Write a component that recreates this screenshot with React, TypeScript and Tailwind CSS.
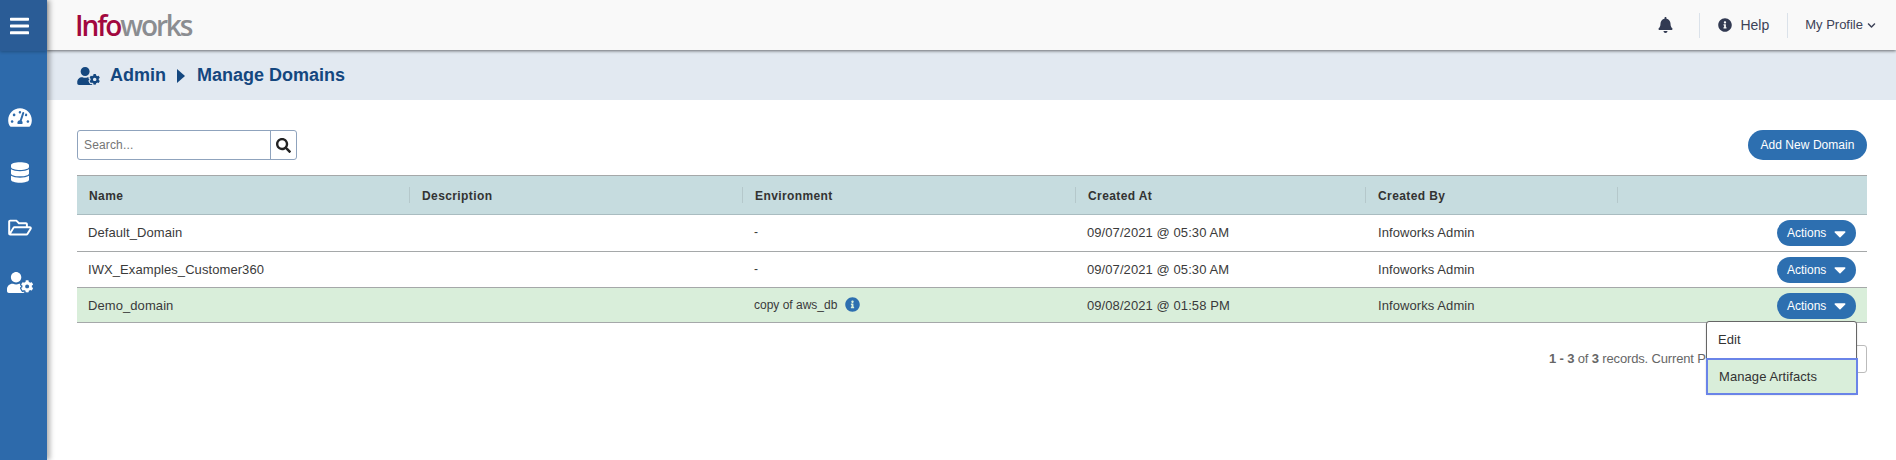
import React from "react";
import { FaBars, FaBell, FaCaretDown, FaChevronDown, FaDatabase, FaInfoCircle, FaRegFolderOpen, FaSearch, FaTachometerAlt, FaUserCog } from "react-icons/fa";

const cols = "grid grid-cols-[332px_333px_333px_290px_252px_1fr]";
const rows = [
  { name: "Default_Domain", env: "-", at: "09/07/2021 @ 05:30 AM", h: "h-[37px]", bg: "bg-white" },
  { name: "IWX_Examples_Customer360", env: "-", at: "09/07/2021 @ 05:30 AM", h: "h-[36px]", bg: "bg-white" },
  { name: "Demo_domain", env: "copy of aws_db", at: "09/08/2021 @ 01:58 PM", h: "h-[35px] pt-[1px]", bg: "bg-[#d9eeda]", info: true },
];

function Head({ label, sep = true }: { label?: string; sep?: boolean }) {
  return (
    <div className="flex h-full items-center">
      {sep ? <div className="h-[16px] w-px bg-[#b5c8cb]" /> : null}
      <span className="pl-[12px] pt-[2px]">{label}</span>
    </div>
  );
}

function Side({ children }: { children: React.ReactNode }) {
  return <div className="flex h-[55px] items-center justify-center pr-[8px]">{children}</div>;
}

export default function App() {
  return (
    <div className="relative flex h-[460px] w-[1896px] overflow-hidden bg-white font-['Liberation_Sans',sans-serif] text-[#333]">
      <aside className="z-20 flex w-[47px] shrink-0 flex-col bg-[#2d6aab] text-white shadow-[3px_0_5px_rgba(0,0,0,0.3)]">
        <div className="flex h-[51px] items-center justify-center bg-[#2a5c96] pr-[8px] shadow-[0_1px_3px_rgba(0,0,0,0.25)]">
          <FaBars className="h-[22px] w-[19px]" />
        </div>
        <div className="flex flex-col pt-[39px]">
          <Side><FaTachometerAlt className="h-[21px] w-[24px]" /></Side>
          <Side><FaDatabase className="h-[21px] w-[18px]" /></Side>
          <Side><FaRegFolderOpen className="h-[21px] w-[24px]" /></Side>
          <Side><FaUserCog className="h-[21px] w-[26px]" /></Side>
        </div>
      </aside>
      <main className="flex min-w-0 flex-1 flex-col">
        <header className="z-10 flex h-[50px] shrink-0 items-center bg-[#f9f9f9] pl-[28px] shadow-[0_1px_3px_rgba(0,0,0,0.55)]">
          <div className="font-['Open_Sans',sans-serif] text-[28px] font-semibold leading-none tracking-[-2.1px]">
            <span className="text-[#a2083f]">Info</span><span className="text-[#8b8d91]">works</span>
          </div>
          <div className="ml-auto flex h-[25px] items-center text-[#3c4257]">
            <FaBell className="mr-[26px] h-[16px] w-[15px] text-[#323a52]" />
            <div className="h-[25px] w-px bg-[#dbe2ea]" />
            <FaInfoCircle className="ml-[18px] h-[14px] w-[14px] text-[#323a52]" />
            <span className="ml-[8px] text-[14px]">Help</span>
            <div className="ml-[18px] h-[25px] w-px bg-[#dbe2ea]" />
            <span className="ml-[17px] text-[13px]">My Profile</span>
            <FaChevronDown className="ml-[4px] mr-[20px] h-[9px] w-[9px]" />
          </div>
        </header>
        <div className="flex h-[50px] shrink-0 items-center bg-[#e2e9f1] pl-[30px] pt-[1px] text-[18px] font-bold text-[#14477f]">
          <FaUserCog className="h-[18px] w-[23px]" />
          <span className="ml-[10px]">Admin</span>
          <svg viewBox="0 0 8 14" className="ml-[11px] h-[14px] w-[8px]" fill="currentColor"><polygon points="0,0 8,7 0,14" /></svg>
          <span className="ml-[12px]">Manage Domains</span>
        </div>
        <div className="flex flex-col px-[30px] pr-[29px] pt-[30px]">
          <div className="flex items-center justify-between">
            <div className="flex h-[30px] w-[220px] rounded-[3px] border border-[#8fa3bd] bg-white">
              <div className="flex flex-1 items-center pl-[6px] text-[12px] tracking-[0.15px] text-[#757575]">Search...</div>
              <div className="flex w-[26px] items-center justify-center border-l border-[#8fa3bd]">
                <FaSearch className="h-[15px] w-[15px] text-[#222]" />
              </div>
            </div>
            <button className="h-[30px] w-[119px] rounded-full bg-[#2d6fb0] text-[12px] tracking-[0.05px] text-white">Add New Domain</button>
          </div>
          <div className="mt-[15px] w-[1790px] text-[12px]">
            <div className={`${cols} h-[40px] border-y border-y-[#a5a8a9] border-b-[#a9bcc0] bg-[#c6dcdf] font-bold tracking-[0.4px] text-[#333]`}>
              <Head label="Name" sep={false} />
              <Head label="Description" />
              <Head label="Environment" />
              <Head label="Created At" />
              <Head label="Created By" />
              <Head />
            </div>
            {rows.map((r) => (
              <div key={r.name} className={`${cols} ${r.h} ${r.bg} items-center border-b border-[#a5a8a9] text-[13px] tracking-[0.08px] text-[#3a3a3a]`}>
                <div className="pl-[11px]">{r.name}</div>
                <div />
                <div className="flex items-center pb-[2px] pl-[12px] text-[12px] tracking-normal">
                  {r.env}
                  {r.info ? <FaInfoCircle className="ml-[8px] h-[15px] w-[15px] text-[#2d6fb0]" /> : null}
                </div>
                <div className="pl-[12px]">{r.at}</div>
                <div className="pl-[13px]">Infoworks Admin</div>
                <div className="flex justify-end pr-[11px]">
                  <button className="flex h-[26px] w-[79px] items-center gap-[8px] rounded-full bg-[#2d6fb0] pl-[10px] text-[12px] tracking-normal text-white">
                    Actions <FaCaretDown className="h-[19px] w-[12px]" />
                  </button>
                </div>
              </div>
            ))}
            <div className="mt-[22px] flex h-[28px] items-center justify-end text-[13px] tracking-[-0.15px] text-[#666]">
              <div className="flex w-[318px] items-center justify-between">
                <span className="whitespace-nowrap"><b>1 - 3</b> of <b>3</b> records. Current Page</span>
                <div className="h-[28px] w-[40px] rounded-[3px] border border-[#bbb]" />
              </div>
            </div>
          </div>
        </div>
      </main>
      <div className="absolute left-[1706px] top-[321px] z-30 w-[151px] rounded-[3px] border border-[#666] bg-white text-[13px] tracking-[0.08px] text-[#333] shadow-[0_1px_2px_rgba(0,0,0,0.2)]">
        <div className="flex h-[36px] items-center pl-[11px]">Edit</div>
        <div className="ml-[-1px] mr-[-2px] mb-[-2px] flex h-[37px] items-center border-2 border-[#6a84e8] bg-[#d9eeda] pl-[11px]">Manage Artifacts</div>
      </div>
    </div>
  );
}
